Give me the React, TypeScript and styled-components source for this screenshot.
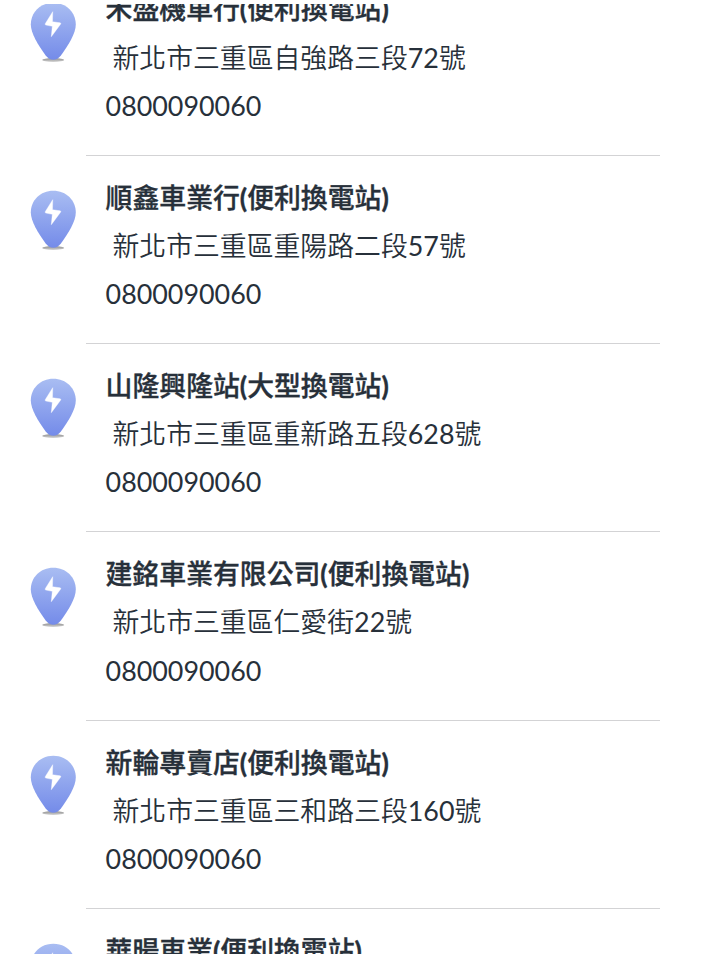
import React from 'react';
import styled, { createGlobalStyle } from 'styled-components';

const GlobalStyle = createGlobalStyle`
  * { box-sizing: border-box; }
  html, body { margin: 0; background: #fff; overflow: hidden; }
`;

const Page = styled.main`
  height: 954px;
  padding-top: 4px;
  background: #fff;
  font-family: Lato, "Noto Sans CJK TC", sans-serif;
  color: #27303a;
`;

const Viewport = styled.div`
  height: 950px;
  overflow: hidden;
`;

const List = styled.ul`
  list-style: none;
  margin: -36.7px 0 0;
  padding: 0;
`;

const Station = styled.li`
  display: flex;
  height: 188.3px;
`;

const PinSlot = styled.div`
  flex: none;
  width: 86px;
  padding: 34.300px 0 0 28px;
`;

const Pin = styled.svg`
  display: block;
`;

const Details = styled.div`
  width: 574px;
  padding: 18px 0 0 19.6px;
  border-bottom: 1px solid #d3d3d5;
`;

const Line = styled.div`
  height: 48.2px;
  line-height: 48.2px;
  font-size: 26.85px;
  white-space: pre;
`;

const Name = styled(Line)`
  font-family: Lato, "Noto Sans CJK TC Medium", "Noto Sans CJK TC", sans-serif;
  font-weight: 700;
  -webkit-text-stroke: 0.35px currentColor;
`;

const Address = styled(Line)`
  font-family: Lato, "Noto Sans CJK TC DemiLight", "Noto Sans CJK TC", sans-serif;
`;

const Phone = styled(Line)``;

const stations = [
  { name: '禾盛機車行(便利換電站)', address: '新北市三重區自強路三段72號' },
  { name: '順鑫車業行(便利換電站)', address: '新北市三重區重陽路二段57號' },
  { name: '山隆興隆站(大型換電站)', address: '新北市三重區重新路五段628號' },
  { name: '建銘車業有限公司(便利換電站)', address: '新北市三重區仁愛街22號' },
  { name: '新輪專賣店(便利換電站)', address: '新北市三重區三和路三段160號' },
  { name: '華暘車業(便利換電站)', address: '新北市三重區' },
];

function StationPin() {
  return (
    <Pin width="50" height="62" viewBox="0 0 50 62">
      <defs>
        <linearGradient id="pinFill" x1="0" y1="0" x2="0" y2="1">
          <stop offset="0" stopColor="#a9bdf2" />
          <stop offset="1" stopColor="#748be9" />
        </linearGradient>
        <linearGradient id="pinShadow" x1="0" y1="0" x2="0" y2="1">
          <stop offset="0" stopColor="#8c8c8c" />
          <stop offset="1" stopColor="#d4d4d4" />
        </linearGradient>
      </defs>
      <ellipse cx="25.2" cy="58" rx="11" ry="1.9" fill="url(#pinShadow)" />
      <path d="M25.3 .8C12.300 .8 2.800 10.500 2.800 22.500C2.800 31 10 43 17.500 53.200Q21 57.800 25.300 57.800T33.100 53.200C40.600 43 47.800 31 47.800 22.500C47.800 10.500 38.300 .8 25.300 .8Z" fill="url(#pinFill)" />
      <path d="M24.700 9.700L17.200 21.800Q16.700 22.800 18 23.100L24.300 24.300L23.300 34.700L32.700 22Q33.300 21 32 20.800L24.500 19.700Z" fill="#fff" stroke="#fff" strokeWidth=".4" strokeLinejoin="round" />
    </Pin>
  );
}

export default function App() {
  return (
    <>
      <GlobalStyle />
      <Page>
        <Viewport>
          <List>
            {stations.map((s) => (
              <Station key={s.name}>
                <PinSlot><StationPin /></PinSlot>
                <Details>
                  <Name>{s.name}</Name>
                  <Address>{' ' + s.address}</Address>
                  <Phone>0800090060</Phone>
                </Details>
              </Station>
            ))}
          </List>
        </Viewport>
      </Page>
    </>
  );
}
